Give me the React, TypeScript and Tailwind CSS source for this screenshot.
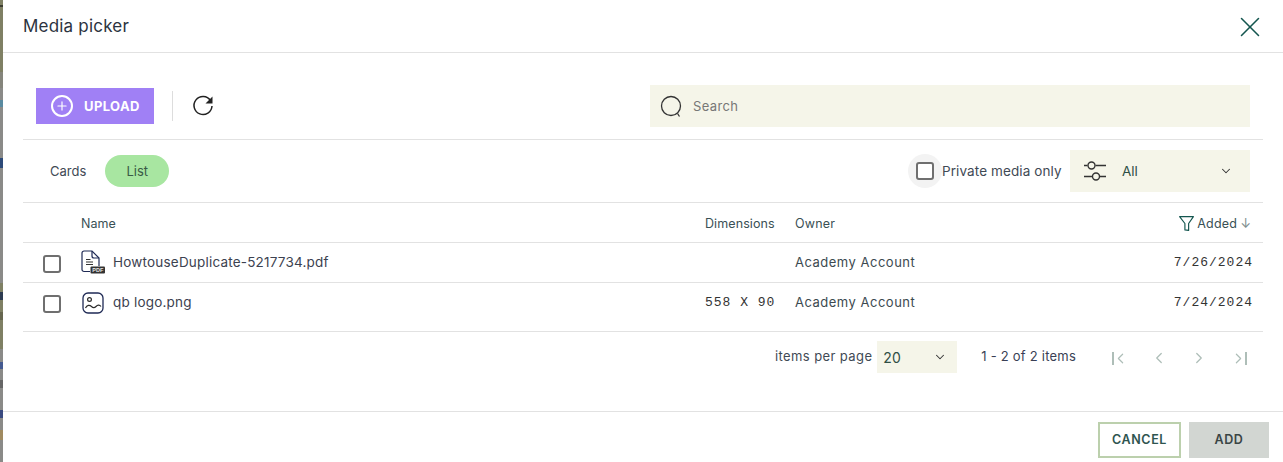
import { ChevronDown, ChevronLeft, ChevronRight, Plus, X } from "lucide-react";

// the page behind the dialog shows through as a thin strip on the left
const strip = [
  "h-[5px] bg-[#7f8064]",
  "h-[2px] bg-[#3d3d30]",
  "h-[65px] bg-[#7f8064]",
  "h-[16px] bg-[#85857c]",
  "h-[12px] bg-[#8a8a88]",
  "h-[7px] bg-[#5a8aa0]",
  "h-[51px] bg-[#8a8a88]",
  "h-[10px] bg-[#2d4a78]",
  "h-[115px] bg-[#8a8a88]",
  "h-[9px] bg-[#7f8064]",
  "h-[8px] bg-[#2c3a50]",
  "h-[12px] bg-[#7f8064]",
  "h-[8px] bg-[#66664f]",
  "h-[29px] bg-[#7f8064]",
  "h-[13px] bg-[#8a8a88]",
  "h-[7px] bg-[#445a90]",
  "h-[11px] bg-[#8a8a88]",
  "h-[8px] bg-[#666666]",
  "h-[22px] bg-[#8a8a88]",
  "h-[8px] bg-[#3a4a80]",
  "h-[12px] bg-[#8a8a88]",
  "h-[10px] bg-[#a08a60]",
  "h-[22px] bg-[#8a8a88]",
];

function Checkbox() {
  return <span className="block w-[18px] h-[18px] rounded-[3px] border-2 border-[#6f6f6f] bg-white" />;
}

function PdfIcon() {
  return (
    <svg width="24" height="24" viewBox="0 0 24 24" fill="none" className="shrink-0 -mt-[1px]">
      <path d="M9 21.5H3a2 2 0 0 1-2-2V3a2 2 0 0 1 2-2h8l7 7v8" stroke="#1f2a55" strokeWidth="1.2" />
      <path d="M11 1v5a2 2 0 0 0 2 2h5" stroke="#1f2a55" strokeWidth="1.2" />
      <path d="M5 9.5h4.500M5 12h7M5 14.500h7" stroke="#333333" strokeWidth="1.1" />
      <rect x="9.500" y="16.500" width="14.500" height="7" rx="1" fill="#333333" />
      <text x="16.750" y="22.200" textAnchor="middle" fontSize="5.500" fontWeight="700" fill="#e8e8e8" fontFamily="Liberation Sans, sans-serif">
        PDF
      </text>
    </svg>
  );
}

function ImageIcon() {
  return (
    <svg width="22" height="22" viewBox="0 0 22 22" fill="none" className="shrink-0 ml-[1px]">
      <rect x="1" y="1" width="20" height="20" rx="5" stroke="#1f2a55" strokeWidth="1.3" />
      <circle cx="7.500" cy="7.500" r="1.900" stroke="#2b2b2b" strokeWidth="1.2" />
      <path d="M3.500 16c1.500-3 4-3.500 6-1.500s3 1.500 4.500 0 3.500-2 5 0" stroke="#2b2b2b" strokeWidth="1.2" />
    </svg>
  );
}

function SlidersIcon() {
  return (
    <svg width="22" height="24" viewBox="0 0 22 24" fill="none" stroke="#333333" strokeWidth="1.4" className="shrink-0">
      <path d="M0 6.500h3.500M11.500 6.500H22M0 17.500h8M16 17.500h6" />
      <circle cx="7.500" cy="6.500" r="3.500" />
      <circle cx="12" cy="17.500" r="3.500" />
    </svg>
  );
}

function RefreshIcon() {
  return (
    <svg width="22" height="22" viewBox="0 0 22 22" fill="none" className="ml-[19px] shrink-0">
      <path d="M18.500 5.500A9 9 0 1 0 20 11" stroke="#222222" strokeWidth="1.500" />
      <path d="M20.500 1.500v7h-7z" fill="#222222" />
    </svg>
  );
}

function Row({ icon, name, dims, date }: { icon: React.ReactNode; name: string; dims: string; date: string }) {
  return (
    <div className="flex items-center h-full">
      <div className="w-[58px] pl-5 shrink-0 pt-[2px]">
        <Checkbox />
      </div>
      <div className="w-8 shrink-0 flex justify-start">{icon}</div>
      <div className="w-[592px] shrink-0 text-[13.5px] text-[#3c4250] tracking-[0.2px]">{name}</div>
      <div className="w-[90px] shrink-0 font-['Liberation_Mono',monospace] text-[13px] text-[#333333] tracking-[1px]">{dims}</div>
      <div className="flex-1 text-[13px] text-[#3c4a50] tracking-[0.5px]">Academy Account</div>
      <div className="pr-[10px] font-['Liberation_Mono',monospace] text-[13px] text-[#333333] tracking-[1px]">{date}</div>
    </div>
  );
}

export default function App() {
  return (
    <div className="flex w-[1283px] h-[462px] overflow-hidden bg-white font-['Inter',sans-serif]">
      <div className="w-[3px] shrink-0 flex flex-col">
        {strip.map((s, i) => (
          <div key={i} className={s} />
        ))}
      </div>
      <div className="flex-1 flex flex-col min-w-0">
        <header className="h-[53px] shrink-0 flex items-center justify-between pl-5 pr-[16px] pt-[1px] border-b border-[#e2e2e2]">
          <h1 className="text-[17px] text-[#2c3340] tracking-[0.2px]">Media picker</h1>
          <X size={34} strokeWidth={1.1} className="text-[#14564f]" />
        </header>

        <div className="flex-1 pl-5 pr-5 flex flex-col">
          <div className="h-[87px] shrink-0 flex items-center border-b border-[#e2e2e2] px-[13px] pt-[20px]">
            <button className="w-[118px] h-9 bg-[#a080f5] flex items-center pl-[15px] gap-[11px] text-white text-[13px] font-bold tracking-[0.4px]">
              <span className="w-[22px] h-[22px] rounded-full border-2 border-white flex items-center justify-center">
                <Plus size={14} strokeWidth={2} />
              </span>
              <span className="pt-[1px]">UPLOAD</span>
            </button>
            <div className="w-px h-[30px] bg-[#dddddd] ml-[18px]" />
            <RefreshIcon />
            <div className="ml-auto w-[600px] h-[42px] bg-[#f5f5e9] flex items-center pl-[10px] gap-[10px]">
              <svg width="23" height="23" viewBox="0 0 23 23" fill="none" stroke="#333333" strokeWidth="1.300">
                <circle cx="11" cy="11" r="9.500" />
                <path d="M17.500 18.500l2 3" />
              </svg>
              <span className="text-[13px] text-[#777777] tracking-[0.35px] pt-[1px]">Search</span>
            </div>
          </div>

          <div className="h-[63px] shrink-0 flex items-center border-b border-[#e2e2e2] pl-[27px] pr-[13px]">
            <span className="text-[13px] text-[#3f4a55] pt-[1px]">Cards</span>
            <span className="ml-[19px] w-16 h-8 rounded-full bg-[#a8e6a1] flex items-center justify-center text-[13px] text-[#3a5a45] pt-[1px]">List</span>
            <div className="ml-auto flex items-center">
              <span className="w-[34px] h-[34px] rounded-full bg-[#f3f3f3] flex items-center justify-center">
                <Checkbox />
              </span>
              <span className="text-[13.5px] text-[#3f4a55] tracking-[0.1px] w-[120px] whitespace-nowrap">Private media only</span>
              <div className="ml-[8px] w-[180px] h-[42px] bg-[#f5f5e9] flex items-center pl-[14px] pr-[17px]">
                <SlidersIcon />
                <span className="ml-[16px] text-[13.5px] text-[#2f4f45]">All</span>
                <ChevronDown size={14} strokeWidth={1.8} className="ml-auto text-[#333333]" />
              </div>
            </div>
          </div>

          <div className="h-10 shrink-0 flex items-center border-b border-[#e2e2e2] text-[12.5px] text-[#3a5055] pt-[3px]">
            <div className="w-[58px] shrink-0" />
            <div className="w-[624px] shrink-0">Name</div>
            <div className="w-[90px] shrink-0 tracking-[0.1px]">Dimensions</div>
            <div className="flex-1 tracking-[0.2px]">Owner</div>
            <div className="pr-[12px] flex items-center gap-[2px]">
              <svg width="17" height="17" viewBox="0 0 16 16" fill="none" stroke="#14564f" strokeWidth="1.100" className="-mt-[2px] -ml-[3px]">
                <path d="M1.500 1.500h13L10 8v6.500L6.500 14V8z" strokeLinejoin="round" />
              </svg>
              <span className="tracking-[0.2px]">Added</span>
              <span className="text-[#7f8f8f] text-[13px] ml-[1px]">↓</span>
            </div>
          </div>

          <div className="h-10 shrink-0 border-b border-[#e2e2e2]">
            <Row icon={<PdfIcon />} name="HowtouseDuplicate-5217734.pdf" dims="" date="7/26/2024" />
          </div>
          <div className="h-[49px] shrink-0 pb-[9px] border-b border-[#e2e2e2]">
            <Row icon={<ImageIcon />} name="qb logo.png" dims="558 X 90" date="7/24/2024" />
          </div>

          <div className="mt-[9px] flex items-center justify-end pr-[17px]">
            <span className="text-[13px] text-[#3f4a55] tracking-[0.4px]">items per page</span>
            <div className="ml-[5px] w-20 h-8 bg-[#f5f5e9] flex items-center pl-[6px] pr-[10px] text-[14px] text-[#2f4f45]">
              20
              <ChevronDown size={14} strokeWidth={1.8} className="ml-auto text-[#333333]" />
            </div>
            <span className="ml-6 text-[13px] text-[#3a3f55] tracking-[0.22px]">1 - 2 of 2 items</span>
            <div className="ml-[36px] flex items-center gap-[22px] text-[#aebeb8] pt-[2px]">
              <span className="flex items-center w-[16px] justify-center">
                <span className="w-[2px] h-[13px] bg-[#aebeb8] shrink-0" />
                <ChevronLeft size={17} strokeWidth={1.7} className="-ml-[2px] shrink-0" />
              </span>
              <ChevronLeft size={18} strokeWidth={1.7} />
              <ChevronRight size={18} strokeWidth={1.7} />
              <span className="flex items-center w-[16px] justify-center">
                <ChevronRight size={17} strokeWidth={1.7} className="-mr-[2px] shrink-0" />
                <span className="w-[2px] h-[13px] bg-[#aebeb8] shrink-0" />
              </span>
            </div>
          </div>
        </div>

        <footer className="h-[51px] shrink-0 flex items-center justify-end gap-2 pr-[14px] pt-[6px] border-t border-[#e2e2e2]">
          <button className="w-[83px] h-9 border-2 border-[#bcd0ad] bg-white text-[12.5px] font-semibold text-[#2f5550] tracking-[0.6px]">CANCEL</button>
          <button className="w-20 h-9 bg-[#d2d6d2] text-[12.5px] font-semibold text-[#3a4545] tracking-[0.6px]">ADD</button>
        </footer>
      </div>
    </div>
  );
}
